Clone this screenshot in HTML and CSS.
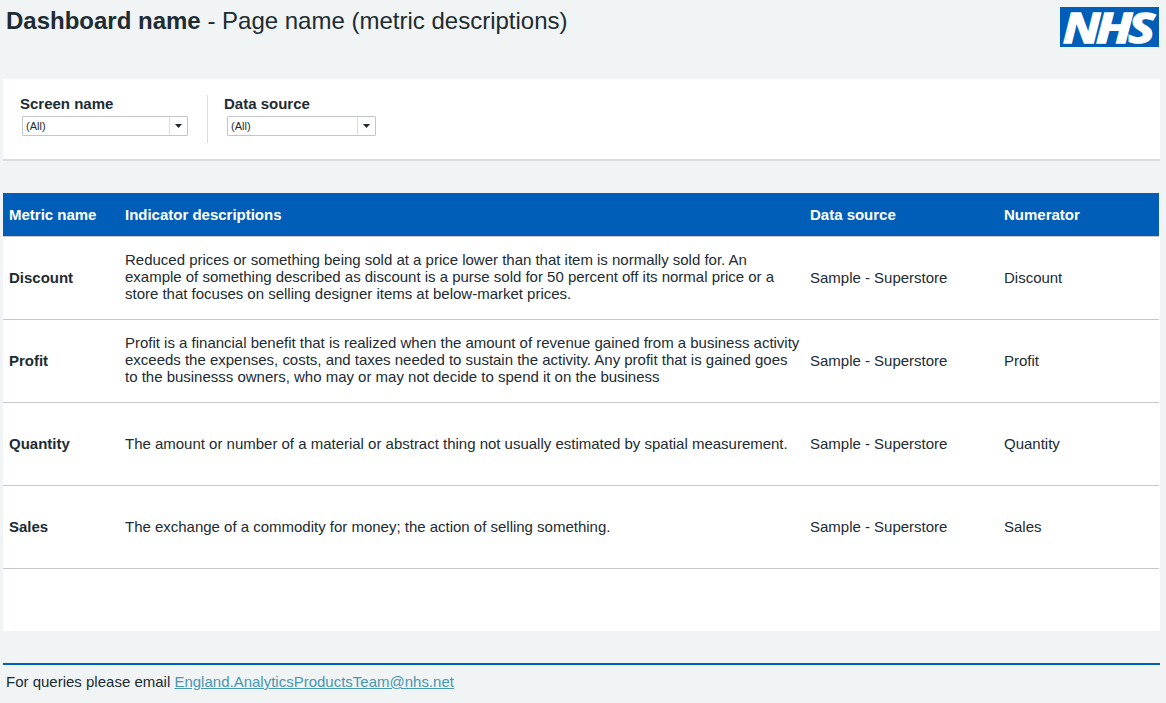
FILE: index.html
```html
<!DOCTYPE html>
<html lang="en">
<head>
<meta charset="utf-8">
<title>Dashboard name - Page name</title>
<link rel="stylesheet" href="styles.css">
</head>
<body>
<div class="page">
  <header class="header">
    <h1 class="title"><b>Dashboard name</b> - Page name (metric descriptions)</h1>
    <svg class="logo" width="99" height="40" viewBox="0 0 99 40" role="img" aria-label="NHS">
      <rect width="99" height="40" fill="#005eb8"/>
      <g class="logo-text">
        <text x="3" y="35.5" textLength="37" lengthAdjust="spacingAndGlyphs">N</text>
        <text x="36" y="35.5" textLength="36" lengthAdjust="spacingAndGlyphs">H</text>
        <text x="68.5" y="35.5" textLength="26" lengthAdjust="spacingAndGlyphs">S</text>
      </g>
    </svg>
  </header>
  <section class="filters">
    <div class="filter filter-screen">
      <div class="label">Screen name</div>
      <div class="select"><span class="value">(All)</span><span class="arrow"><svg width="7" height="4" viewBox="0 0 7 4"><path d="M0 0H7L3.5 4Z" fill="#1f282f"/></svg></span></div>
    </div>
    <div class="filter filter-source">
      <div class="label">Data source</div>
      <div class="select"><span class="value">(All)</span><span class="arrow"><svg width="7" height="4" viewBox="0 0 7 4"><path d="M0 0H7L3.5 4Z" fill="#1f282f"/></svg></span></div>
    </div>
  </section>
  <main class="panel">
    <div class="row head"><div>Metric name</div><div>Indicator descriptions</div><div>Data source</div><div>Numerator</div></div>
    <div class="row"><div class="metric">Discount</div><div class="long">Reduced prices or something being sold at a price lower than that item is normally sold for. An<br>example of something described as discount is a purse sold for 50 percent off its normal price or a<br>store that focuses on selling designer items at below-market prices.</div><div>Sample - Superstore</div><div>Discount</div></div>
    <div class="row"><div class="metric">Profit</div><div class="long">Profit is a financial benefit that is realized when the amount of revenue gained from a business activity<br>exceeds the expenses, costs, and taxes needed to sustain the activity. Any profit that is gained goes<br>to the businesss owners, who may or may not decide to spend it on the business</div><div>Sample - Superstore</div><div>Profit</div></div>
    <div class="row"><div class="metric">Quantity</div><div>The amount or number of a material or abstract thing not usually estimated by spatial measurement.</div><div>Sample - Superstore</div><div>Quantity</div></div>
    <div class="row"><div class="metric">Sales</div><div>The exchange of a commodity for money; the action of selling something.</div><div>Sample - Superstore</div><div>Sales</div></div>
  </main>
  <footer class="footer">For queries please email <a class="mail" href="mailto:England.AnalyticsProductsTeam@nhs.net">England.AnalyticsProductsTeam@nhs.net</a></footer>
</div>
</body>
</html>
```
FILE: styles.css
```css
* { box-sizing: border-box; }
body {
  margin: 0;
  background: #f0f4f5;
  color: #212b32;
  font-family: "Liberation Sans", Arial, sans-serif;
  font-size: 15px;
  line-height: 17px;
}
.page { height: 703px; padding: 0 6px 0 3px; }
.header { display: flex; justify-content: space-between; height: 79px; padding: 7px 1px 0 3px; }
.title { margin: 0; font-size: 24px; line-height: 28px; font-weight: 400; white-space: nowrap; }
.logo { display: block; overflow: visible; }
.logo-text {
  font-family: "Open Sans", "Noto Sans", sans-serif;
  font-size: 41px;
  font-weight: 700;
  font-style: italic;
  fill: #fff;
  stroke: #fff;
  stroke-width: 1.7px;
}
.filters {
  display: flex;
  height: 82px;
  padding: 16px 0 0 17px;
  background: #fff;
  border-bottom: 2px solid #d8dddd;
}
.filter { height: 48px; }
.filter-screen { width: 188px; padding-right: 19px; border-right: 1px solid #d8dddd; }
.filter-source { width: 168px; padding-left: 16px; }
.label { height: 21px; font-weight: 700; }
.select {
  display: flex;
  height: 20px;
  margin-left: 2px;
  border: 1px solid #c4c6c8;
  border-radius: 1px;
  font-size: 11px;
  line-height: 18px;
}
.filter-source .select { margin-left: 3px; }
.value { flex: 1; padding-left: 3px; }
.arrow {
  display: flex;
  align-items: center;
  justify-content: center;
  width: 18px;
  border-left: 1px solid #dcdedf;
}
.panel { height: 438px; margin-top: 32px; padding-right: 1px; background: #fff; }
.row {
  display: grid;
  grid-template-columns: 116px 685px 194px 1fr;
  align-items: center;
  height: 83px;
  padding: 0 0 2px 6px;
  border-bottom: 1px solid #c8c8c8;
  letter-spacing: -0.01px;
  white-space: nowrap;
}
.head { height: 44px; padding-bottom: 0; background: #005eb8; background-clip: padding-box; color: #fff; font-weight: 700; }
.metric { font-weight: 700; }
.long { padding-bottom: 2px; }
.footer { margin-top: 32px; padding: 8px 0 0 3px; border-top: 2px solid #005eb8; }
.mail { color: #4996b2; }
```
